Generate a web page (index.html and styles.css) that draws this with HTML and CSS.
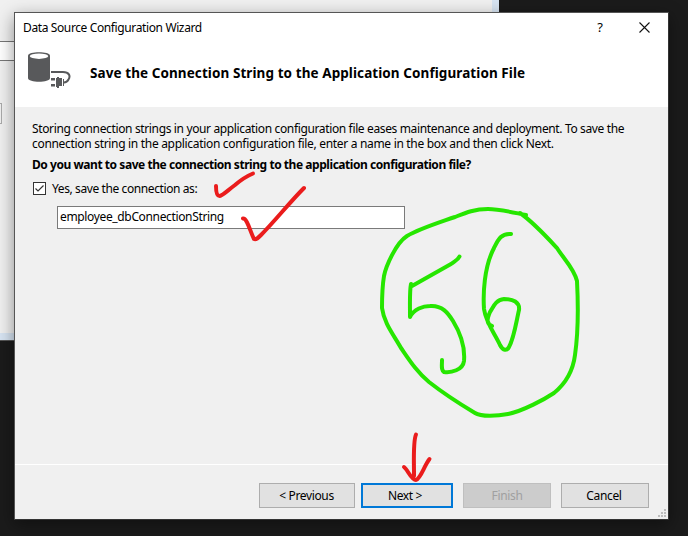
FILE: index.html
```
<!DOCTYPE html>
<html lang="en">
<head>
<meta charset="utf-8">
<title>Data Source Configuration Wizard</title>
<link rel="stylesheet" href="styles.css">
</head>
<body>
<div class="desktop">
  <div class="back-window"><div class="back-field"></div><div class="back-button"></div></div>
  <main class="dialog">
    <header class="header">
      <div class="titlebar">
        <span class="title">Data Source Configuration Wizard</span>
        <span class="help">?</span>
        <svg class="close" width="11" height="11" viewBox="0 0 11 11"><path d="M.5 .5 10.5 10.5M10.5 .5 .5 10.5" stroke="#111" stroke-width="1.1" fill="none"/></svg>
      </div>
      <div class="banner">
        <svg class="db-icon" width="44" height="38" viewBox="0 0 44 38">
          <path fill="#58595b" d="M1 4.500C1 0 23 0 23 4.500V27C23 32 1 32 1 27Z"/>
          <ellipse cx="12" cy="5.2" rx="9.2" ry="2.7" fill="#fff"/>
          <path d="M24 21H36C42 21 43.800 24.800 41.500 28.500C40.500 30.500 39 31.400 37 31.400" fill="none" stroke="#58595b" stroke-width="2"/>
          <path fill="#58595b" d="M24 27h4v2.600h-4zM24 33h4v2.600h-4zM29 27h1v-1h2v1h3v8h-3v2h-2v-1h-1zM36 28h1v7h-1z"/>
        </svg>
        <h1 class="heading">Save the Connection String to the Application Configuration File</h1>
      </div>
    </header>
    <section class="content">
      <p class="intro"><span class="line line-one">Storing connection strings in your application configuration file eases maintenance and deployment. To save the</span> <span class="line line-two">connection string in the application configuration file, enter a name in the box and then click Next.</span></p>
      <p class="question">Do you want to save the connection string to the application configuration file?</p>
      <div class="option">
        <svg class="checkbox" width="13" height="13" viewBox="0 0 13 13"><rect x=".5" y=".5" width="12" height="12" fill="#fff" stroke="#333"/><path d="M2.500 6.500 5 9 10.500 3.500" fill="none" stroke="#333" stroke-width="1.2"/></svg>
        <span class="option-label">Yes, save the connection as:</span>
      </div>
      <div class="field"><span class="field-text">employee_dbConnectionString</span></div>
    </section>
    <footer class="footer">
      <div class="button previous">&lt; Previous</div>
      <div class="button next">Next &gt;</div>
      <div class="button finish">Finish</div>
      <div class="button cancel">Cancel</div>
      <svg class="grip" width="8" height="8" viewBox="0 0 8 8"><path fill="#bdbdbd" d="M6 0h2v2H6zM3 3h2v2H3zM6 3h2v2H6zM0 6h2v2H0zM3 6h2v2H3zM6 6h2v2H6z"/></svg>
    </footer>
  </main>
  <svg class="ink" width="688" height="536" viewBox="0 0 688 536">
    <g class="red">
      <path d="M216 186C216 193 217 196 219.500 196C222 196 227 191 235 185C242 179 247 176 253 173.500"/>
      <path d="M243 218.500C247 218 250 231 254 239C256 240 258 238 261 235C275 221 289 203 304 188"/>
      <path d="M416 434.500C413 441 414 458 414 476M404 467C408 470 411 480 416 480C421 478 424 466 429.500 459"/>
    </g>
    <g class="green">
      <path d="M526 215C511 212 499 209 488 209C474 209 465 213 455 217C432 225 419 229 407 236C396 243 386 266 384 276C382 288 382 299 382 308C384 323 393 334 401 348C410 361 417 372 429 382C443 393 460 404 475 413C481 417 498 416 508 414C523 411 545 399 554 393C565 384 573 371 575 355C579 327 578 300 577 281C574 268 563 258 557 248C544 234 533 222 520 213"/>
      <path d="M459.500 256.500C458 260 455 261 451 264L412 286M411 284C409.500 291 410 302 410 317C414 309 423 306 430 306C442 305 448 313 453 321C461 334 465 349 464 361C463 370 451 373 444 372C441 370 442 366 442 360"/>
      <path d="M511 234C501 233 498 240 494 248C484 267 483 294 484 309C486 323 495 334 500 345C503 351 507 351 509 347C514 338 516 323 519 310C520 302 513 299 504 299C495 300 493 308 490 312C487 319 486 324 492 326"/>
    </g>
  </svg>
</div>
</body>
</html>
```
FILE: styles.css
```
* { box-sizing: border-box; }
body { margin: 0; }
.desktop {
  position: relative;
  width: 688px;
  height: 536px;
  overflow: hidden;
  padding: 12px 0 0 14px;
  background: #1b1b1b;
  font: 12px/15px "Noto Sans", "Open Sans", sans-serif;
  color: #000;
}
.back-window {
  position: absolute;
  left: 0;
  top: 0;
  width: 499px;
  height: 340px;
  background: #f0f0f0;
  border: solid #d7e4f2;
  border-width: 0 7px 7px 0;
  box-shadow: 0 1px 0 #555;
  padding-top: 41px;
}
.back-field { height: 20px; background: #fff; border: solid #777; border-width: 1px 0; }
.back-button { width: 2px; height: 21px; margin-top: 42px; border: 1px solid #aaa; border-left: 0; }
.dialog {
  position: relative;
  display: flex;
  flex-direction: column;
  width: 655px;
  height: 508px;
  background: #f0f0f0;
  border: 1px solid #555;
  border-right-color: #333;
  border-bottom-color: #333;
  box-shadow: 0 5px 16px rgba(0, 0, 0, .42);
}
.header { height: 94px; background: #fff; }
.titlebar { display: flex; align-items: center; height: 28px; padding: 0 18px 0 8px; }
.title { letter-spacing: -.38px; }
.help { margin: 0 36px 0 auto; font-size: 13px; }
.banner { display: flex; }
.db-icon { margin: 10px 0 0 12px; }
.heading { margin: 22px 0 0 19px; font-size: 13.5px; line-height: 20px; font-weight: 700; letter-spacing: .08px; white-space: nowrap; }
.content { flex: 1; padding: 14px 17px 0; white-space: nowrap; }
.intro { margin: 0; }
.line { display: block; }
.line-one { letter-spacing: -.36px; }
.line-two { letter-spacing: -.31px; }
.question { margin: 6px 0 0; font-weight: 700; letter-spacing: -.45px; }
.option { display: flex; align-items: center; gap: 6px; margin: 9px 0 0 1px; }
.option-label { letter-spacing: -.4px; }
.field { width: 348px; height: 23px; margin: 10px 0 0 25px; padding: 2px 2px; background: #fff; border: 1px solid #7a7a7a; }
.field-text { letter-spacing: -.35px; }
.footer { position: relative; display: flex; height: 55px; padding: 18px 0 0 244px; border-top: 1px solid #fff; }
.button { height: 25px; border: 1px solid #adadad; background: #e1e1e1; text-align: center; line-height: 24px; letter-spacing: -.35px; }
.previous { width: 96px; padding-right: 1px; }
.next { width: 92px; margin-left: 6px; border: 2px solid #0078d7; line-height: 22px; padding-right: 4px; }
.finish { width: 88px; margin-left: 10px; background: #ccc; border-color: #bfbfbf; color: #a0a0a0; }
.cancel { width: 88px; margin-left: 10px; padding-right: 2px; }
.grip { position: absolute; right: 2px; bottom: 2px; }
.ink { position: absolute; left: 0; top: 0; pointer-events: none; }
.ink path { fill: none; stroke-linecap: round; stroke-linejoin: round; }
.red path { stroke: #ea1c1c; stroke-width: 4; }
.green path { stroke: #26e600; stroke-width: 4; }
```
